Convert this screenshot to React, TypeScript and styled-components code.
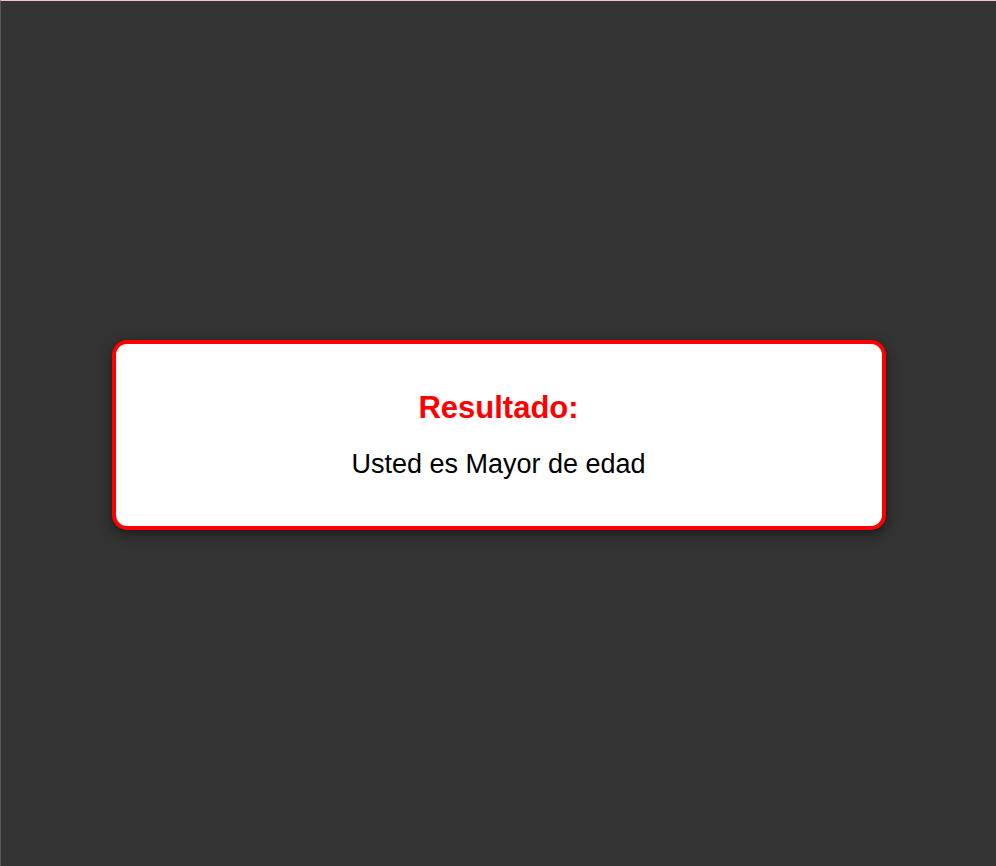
import React from 'react';
import styled, { createGlobalStyle } from 'styled-components';

const GlobalStyle = createGlobalStyle`
  html, body {
    margin: 0;
    padding: 0;
    background-color: #333333;
    font-family: "Liberation Sans", Arial, sans-serif;
  }
`;

const Page = styled.div`
  box-sizing: border-box;
  height: 100vh;
  padding-top: 3px;
  display: flex;
  align-items: center;
  justify-content: center;
  background-color: #333333;
  border-top: 1px solid #f0c4c4;
  border-left: 1px solid #585858;
`;

const ResultCard = styled.div`
  box-sizing: border-box;
  width: 774px;
  padding: 46px 20px 46px;
  background-color: #ffffff;
  border: 4px solid #ff0000;
  border-radius: 15px;
  box-shadow: 0 4px 12px rgba(0, 0, 0, 0.5);
  text-align: center;
`;

const Title = styled.h2`
  margin: 0 0 23px;
  font-size: 31px;
  line-height: 36px;
  font-weight: bold;
  color: #ff0000;
`;

const Message = styled.p`
  margin: 0;
  font-size: 27px;
  line-height: 31px;
  color: #000000;
`;

export default function App() {
  return (
    <>
      <GlobalStyle />
      <Page>
        <ResultCard>
          <Title>Resultado:</Title>
          <Message>Usted es Mayor de edad</Message>
        </ResultCard>
      </Page>
    </>
  );
}
